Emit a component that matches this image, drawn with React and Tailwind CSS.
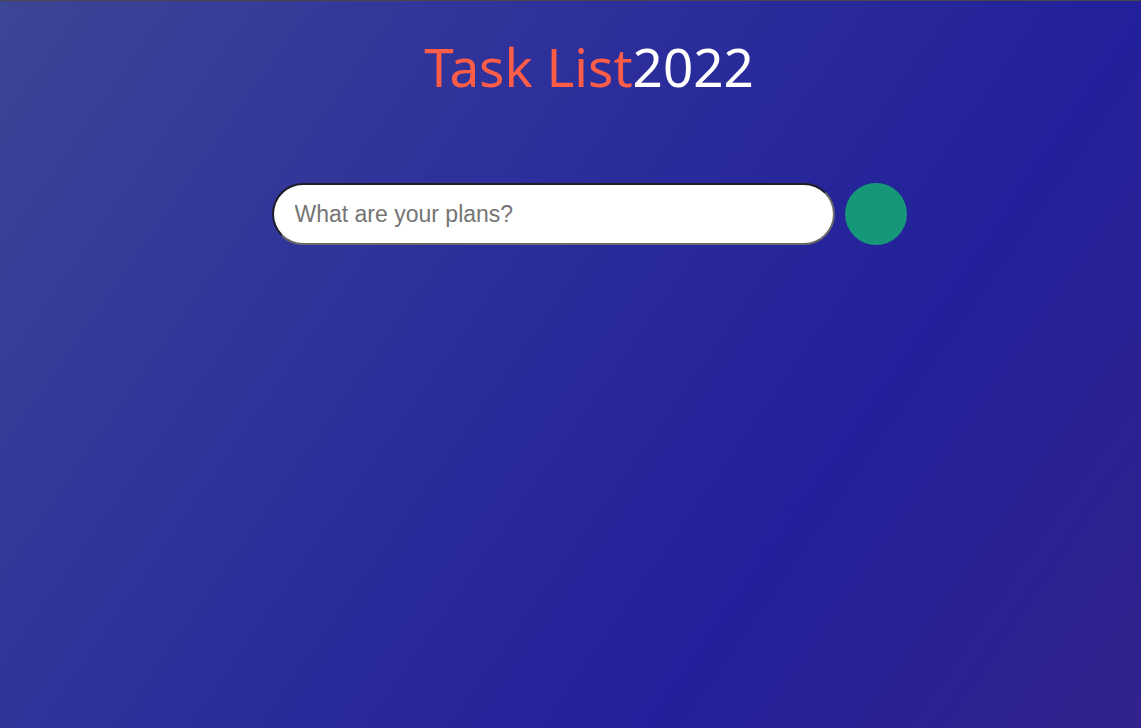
import React, { useState } from "react";

const App = () => {
  const [input, setInput] = useState("");

  return (
    <div className="min-h-[728px] w-full border-t border-[#474747] bg-[linear-gradient(125deg,#3d4595_0%,#2c2e9b_40%,#22209a_70%,#31228c_100%)] pl-[37px]">
      <div className="flex flex-col items-center">
        <h1 className="mt-[26px] text-[53px] leading-[80px] font-normal font-['Noto_Sans',sans-serif]">
          <span className="text-[#ff5d47]">Task List</span>
          <span className="text-white">2022</span>
        </h1>

        <form
          onSubmit={(e) => e.preventDefault()}
          className="mt-[76px] flex items-center gap-[10px]"
        >
          <input
            value={input}
            onChange={(e) => setInput(e.target.value)}
            type="text"
            placeholder="What are your plans?"
            className="w-[563px] h-[62px] rounded-full bg-white px-[21px] text-[23px] text-gray-800 placeholder:text-[#757575] font-['Liberation_Sans',Arial,sans-serif] outline-none border-2 border-t-[#1e1e2a] border-l-[#1e1e2a] border-r-[#6a6a6a] border-b-[#6a6a6a]"
          />
          <button
            type="submit"
            className="w-[62px] h-[62px] rounded-full bg-[#16977a] cursor-pointer"
          ></button>
        </form>
      </div>
    </div>
  );
};

export default App;
